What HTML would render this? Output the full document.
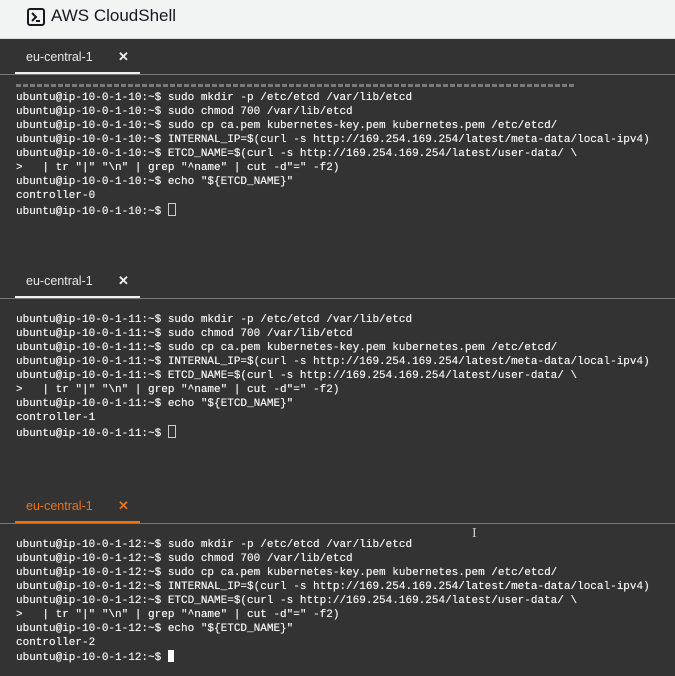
<!DOCTYPE html><html><head><style>
body{margin:0;width:675px;height:676px;background:#333;overflow:hidden;font-family:"Liberation Sans",sans-serif;position:relative}
.hdr{position:absolute;left:0;top:0;width:675px;height:38px;background:#f2f3f3;border-bottom:1px solid #ddd}
.hdr .t{position:absolute;left:51px;top:6px;font-size:17px;color:#16191f}
.hdr svg{position:absolute;left:27px;top:8px}
.tab{position:absolute;left:15px;width:125px;height:2px;background:#eee}
.tabt{position:absolute;left:26px;font-size:12.5px;color:#e8e8e8}
.x{position:absolute;left:118px;font-size:13px;font-weight:bold;color:#eee}
.line{position:absolute;left:0;width:675px;height:1px;background:#777}
pre{position:absolute;left:16px;margin:0;font-family:"Liberation Mono",monospace;font-size:11px;line-height:14px;color:#f4f4f4;text-shadow:0 0 0.4px #fff}
.cur{display:inline-block;width:6px;height:11px;border:1px solid #ccc;vertical-align:-2px}
.curf{display:inline-block;width:6px;height:12px;background:#fff;vertical-align:-2px}
</style></head><body>
<div class="hdr"><svg width="18" height="18" viewBox="0 0 18 18"><rect x="1" y="1" width="16" height="16" rx="2" fill="none" stroke="#16191f" stroke-width="2"/><path d="M5 5l4 4-4 4M9 13h4" fill="none" stroke="#16191f" stroke-width="2"/></svg><div class="t">AWS CloudShell</div></div>

<div class="tabt" style="top:50px">eu-central-1</div><div class="x" style="top:49px">✕</div>
<div class="line" style="top:74px"></div><div class="tab" style="top:72px"></div>
<div style="position:absolute;left:16px;top:84px;width:560px;height:3px;background:repeating-linear-gradient(90deg,#aaa 0 5px,transparent 5px 7px);opacity:.6"></div>
<pre style="top:91px">ubuntu@ip-10-0-1-10:~$ sudo mkdir -p /etc/etcd /var/lib/etcd
ubuntu@ip-10-0-1-10:~$ sudo chmod 700 /var/lib/etcd
ubuntu@ip-10-0-1-10:~$ sudo cp ca.pem kubernetes-key.pem kubernetes.pem /etc/etcd/
ubuntu@ip-10-0-1-10:~$ INTERNAL_IP=$(curl -s http://169.254.169.254/latest/meta-data/local-ipv4)
ubuntu@ip-10-0-1-10:~$ ETCD_NAME=$(curl -s http://169.254.169.254/latest/user-data/ \
>   | tr "|" "\n" | grep "^name" | cut -d"=" -f2)
ubuntu@ip-10-0-1-10:~$ echo "${ETCD_NAME}"
controller-0
ubuntu@ip-10-0-1-10:~$ <span class="cur"></span></pre>

<div class="tabt" style="top:274px">eu-central-1</div><div class="x" style="top:273px">✕</div>
<div class="line" style="top:298px"></div><div class="tab" style="top:296px"></div>
<pre style="top:313px">ubuntu@ip-10-0-1-11:~$ sudo mkdir -p /etc/etcd /var/lib/etcd
ubuntu@ip-10-0-1-11:~$ sudo chmod 700 /var/lib/etcd
ubuntu@ip-10-0-1-11:~$ sudo cp ca.pem kubernetes-key.pem kubernetes.pem /etc/etcd/
ubuntu@ip-10-0-1-11:~$ INTERNAL_IP=$(curl -s http://169.254.169.254/latest/meta-data/local-ipv4)
ubuntu@ip-10-0-1-11:~$ ETCD_NAME=$(curl -s http://169.254.169.254/latest/user-data/ \
>   | tr "|" "\n" | grep "^name" | cut -d"=" -f2)
ubuntu@ip-10-0-1-11:~$ echo "${ETCD_NAME}"
controller-1
ubuntu@ip-10-0-1-11:~$ <span class="cur"></span></pre>

<div class="tabt" style="top:499px;color:#ec7211">eu-central-1</div><div class="x" style="top:498px;color:#ec7211">✕</div>
<div class="line" style="top:523px"></div><div class="tab" style="top:521px;background:#ec7211"></div>
<pre style="top:538px">ubuntu@ip-10-0-1-12:~$ sudo mkdir -p /etc/etcd /var/lib/etcd
ubuntu@ip-10-0-1-12:~$ sudo chmod 700 /var/lib/etcd
ubuntu@ip-10-0-1-12:~$ sudo cp ca.pem kubernetes-key.pem kubernetes.pem /etc/etcd/
ubuntu@ip-10-0-1-12:~$ INTERNAL_IP=$(curl -s http://169.254.169.254/latest/meta-data/local-ipv4)
ubuntu@ip-10-0-1-12:~$ ETCD_NAME=$(curl -s http://169.254.169.254/latest/user-data/ \
>   | tr "|" "\n" | grep "^name" | cut -d"=" -f2)
ubuntu@ip-10-0-1-12:~$ echo "${ETCD_NAME}"
controller-2
ubuntu@ip-10-0-1-12:~$ <span class="curf"></span></pre>
<div style="position:absolute;left:472px;top:526px;color:#ccc;font-size:14px;font-family:'Liberation Serif',serif">I</div>
</body></html>
